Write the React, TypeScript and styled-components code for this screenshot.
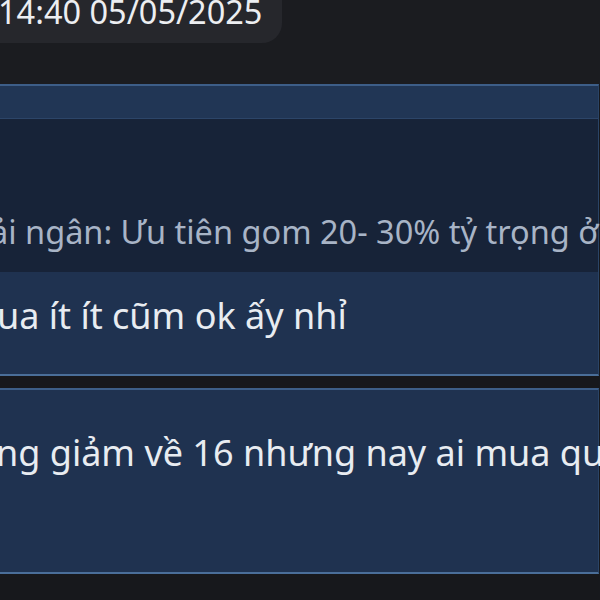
import styled, { createGlobalStyle } from "styled-components";

const GlobalStyle = createGlobalStyle`
  html, body {
    margin: 0;
    padding: 0;
    background: #17181c;
    overflow: hidden;
  }
  body {
    font-family: "Noto Sans", "Open Sans", sans-serif;
  }
`;

const Page = styled.div`
  width: 600px;
  height: 600px;
  overflow: hidden;
  background: #17181c;
  display: flex;
  flex-direction: column;
`;

const TopArea = styled.div`
  height: 84px;
  background: #1b1c20;
  flex-shrink: 0;
`;

const DatePill = styled.div`
  display: inline-block;
  margin-top: -9px;
  margin-left: -30px;
  padding: 0 20px 0 28px;
  height: 52px;
  line-height: 42px;
  background: #26272c;
  border-bottom-right-radius: 20px;
  color: #eceef1;
  font-size: 32.5px;
  white-space: nowrap;
`;

const Bubble = styled.div`
  margin-left: -20px;
  width: 618px;
  border-top: 2px solid #3d5e88;
  border-bottom: 2px solid #4a6e99;
  border-right: 1px solid #2a4466;
  background: #1f3250;
  flex-shrink: 0;
  display: flex;
  flex-direction: column;
`;

const BubbleHeader = styled.div`
  height: 32px;
  background: #213655;
  border-bottom: 1px solid #2c4568;
`;

const Quote = styled.div`
  height: 153px;
  background: #172338;
  display: flex;
  flex-direction: column;
  justify-content: flex-end;
  padding-bottom: 22px;
  box-sizing: border-box;
`;

const QuoteText = styled.div<{ $shift: number }>`
  margin-left: ${(p) => 20 + p.$shift}px;
  color: #a8b4c6;
  font-size: 32.5px;
  line-height: 36px;
  white-space: nowrap;
`;

const Body = styled.div<{ $height: number; $top: number }>`
  height: ${(p) => p.$height}px;
  padding-top: ${(p) => p.$top}px;
  box-sizing: border-box;
`;

const MessageText = styled.div<{ $shift: number }>`
  margin-left: ${(p) => 20 + p.$shift}px;
  color: #e8ecf1;
  font-size: 36px;
  line-height: 44px;
  white-space: nowrap;
`;

const Gap = styled.div`
  height: 12px;
  flex-shrink: 0;
`;

export default function App() {
  return (
    <>
      <GlobalStyle />
      <Page>
        <TopArea>
          <DatePill>14:40 05/05/2025</DatePill>
        </TopArea>
        <Bubble>
          <BubbleHeader />
          <Quote>
            <QuoteText $shift={-10}>ải ngân: Ưu tiên gom 20- 30% tỷ trọng ở</QuoteText>
          </Quote>
          <Body $height={102} $top={22}>
            <MessageText $shift={-3}>ua ít ít cũm ok ấy nhỉ</MessageText>
          </Body>
        </Bubble>
        <Gap />
        <Bubble>
          <Body $height={182} $top={41}>
            <MessageText $shift={-4}>ng giảm về 16 nhưng nay ai mua qu</MessageText>
          </Body>
        </Bubble>
      </Page>
    </>
  );
}
